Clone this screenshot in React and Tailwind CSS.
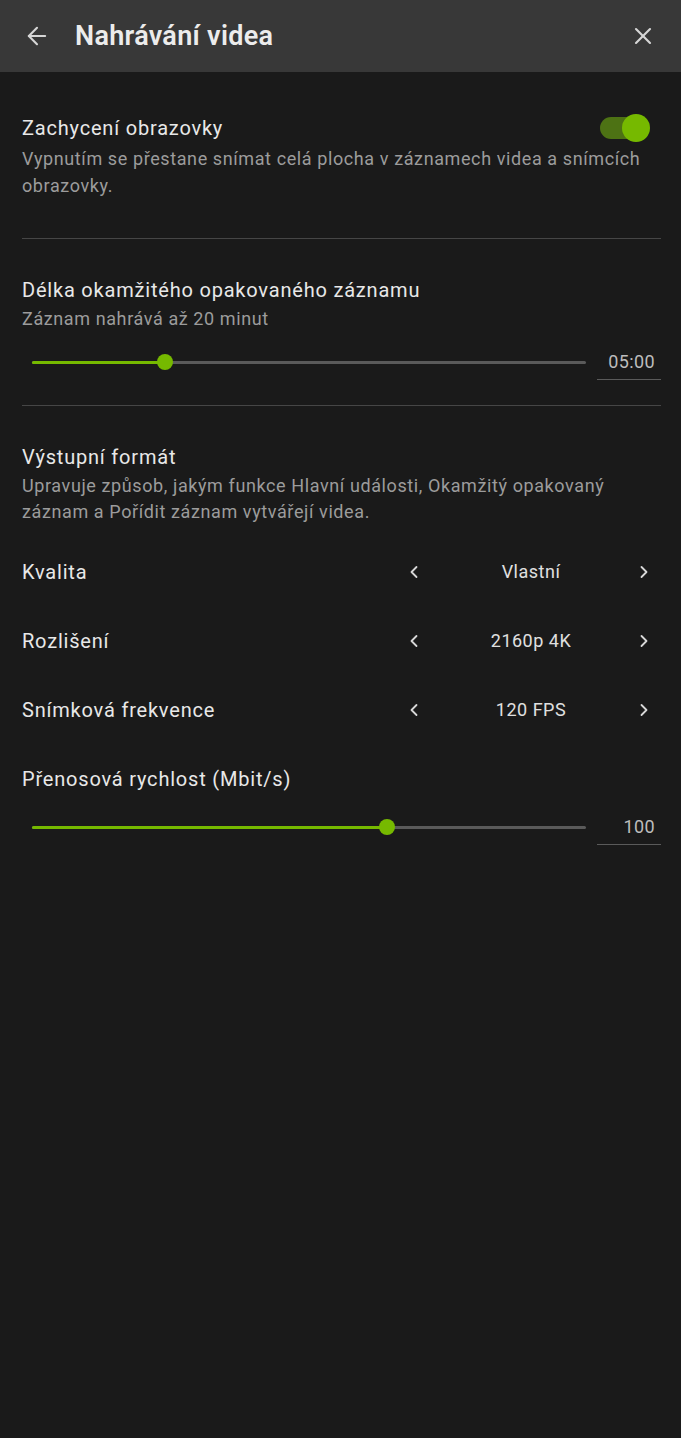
import React, { useState } from 'react';
import { ArrowLeft, X, ChevronLeft, ChevronRight } from 'lucide-react';

const font = { fontFamily: 'Roboto, "Noto Sans", sans-serif' };

const Toggle = ({ on, setOn }) => (
  <button
    onClick={() => setOn(!on)}
    className="relative w-[50px] h-[28px] flex items-center shrink-0"
  >
    <span className="absolute left-0 right-[4px] h-[22px] rounded-full bg-[#4d7214]" />
    <span className="absolute right-0 w-[28px] h-[28px] rounded-full bg-[#76b900]" />
  </button>
);

const Slider = ({ pct, value }) => (
  <div className="flex items-start">
    <div className="flex-1 px-[10px] h-[26px] flex items-center">
      <div className="w-full h-[3px] bg-[#5a5a5a] rounded-full relative">
        <div className="absolute left-0 top-0 h-[3px] bg-[#76b900] rounded-full" style={{ width: `${pct}%` }} />
        <div
          className="absolute top-1/2 w-[16px] h-[16px] -mt-[8px] -ml-[8px] rounded-full bg-[#76b900]"
          style={{ left: `${pct}%` }}
        />
      </div>
    </div>
    <div className="w-[64px] ml-[1px] border-b border-[#5a5a5a] text-right pr-[6px] pb-[4px] text-[18px] leading-[26px] tracking-[0.4px] text-[#bdbdbd]">
      {value}
    </div>
  </div>
);

const Picker = ({ label, value }) => (
  <div className="flex items-center h-[69px]">
    <div className="flex-1 text-[20px] tracking-[0.8px] text-[#e8e8e8]">{label}</div>
    <div className="w-[260px] flex items-center justify-between text-[#d8d8d8]">
      <ChevronLeft size={20} strokeWidth={2.2} className="ml-[3px]" />
      <span className="text-[18px] tracking-[0.5px] text-[#e0e0e0] ml-[4px]">{value}</span>
      <ChevronRight size={20} strokeWidth={2.2} className="mr-[7px]" />
    </div>
  </div>
);

export default function App() {
  const [capture, setCapture] = useState(true);

  return (
    <div className="w-[681px] h-[1438px] bg-[#1a1a1a] flex flex-col" style={font}>
      {/* header */}
      <div className="h-[72px] bg-[#383838] flex items-center pl-[23px] pr-[24px] shrink-0">
        <ArrowLeft size={28} strokeWidth={1.8} className="text-[#d6d6d6]" />
        <div className="ml-[24px] text-[27px] tracking-[0.3px] font-semibold text-[#ececec] flex-1">Nahrávání videa</div>
        <X size={28} strokeWidth={1.8} className="text-[#d6d6d6]" />
      </div>

      <div className="pl-[22px] pr-[20px] pt-[42px] flex flex-col">
        {/* screen capture */}
        <div className="pb-[39px] border-b border-[#464646]">
          <div className="flex items-center justify-between">
            <div className="text-[20px] tracking-[0.8px] text-[#e8e8e8] leading-[28px]">Zachycení obrazovky</div>
            <div className="mr-[11px]">
              <Toggle on={capture} setOn={setCapture} />
            </div>
          </div>
          <p className="text-[18px] tracking-[0.6px] text-[#9c9c9c] leading-[27px] mt-[3px] pr-[10px]">
            Vypnutím se přestane snímat celá plocha v záznamech videa a snímcích obrazovky.
          </p>
        </div>

        {/* instant replay */}
        <div className="pt-[37px] pb-[25px] border-b border-[#464646]">
          <div className="text-[20px] tracking-[0.8px] text-[#e8e8e8] leading-[28px]">Délka okamžitého opakovaného záznamu</div>
          <div className="text-[18px] tracking-[0.6px] text-[#9c9c9c] leading-[27px] mt-[1px]">Záznam nahrává až 20 minut</div>
          <div className="mt-[17px]">
            <Slider pct={24} value="05:00" />
          </div>
        </div>

        {/* output format */}
        <div className="pt-[37px]">
          <div className="text-[20px] tracking-[0.8px] text-[#e8e8e8] leading-[28px]">Výstupní formát</div>
          <p className="text-[18px] tracking-[0.6px] text-[#9c9c9c] leading-[26px] mt-[2px] pr-[10px]">
            Upravuje způsob, jakým funkce Hlavní události, Okamžitý opakovaný záznam a Pořídit záznam vytvářejí videa.
          </p>
          <div className="mt-[12px]">
            <Picker label="Kvalita" value="Vlastní" />
            <Picker label="Rozlišení" value="2160p 4K" />
            <Picker label="Snímková frekvence" value="120 FPS" />
          </div>
          <div className="text-[20px] tracking-[0.8px] text-[#e8e8e8] leading-[28px] mt-[21px]">Přenosová rychlost (Mbit/s)</div>
          <div className="mt-[21px]">
            <Slider pct={64} value="100" />
          </div>
        </div>
      </div>
    </div>
  );
}
